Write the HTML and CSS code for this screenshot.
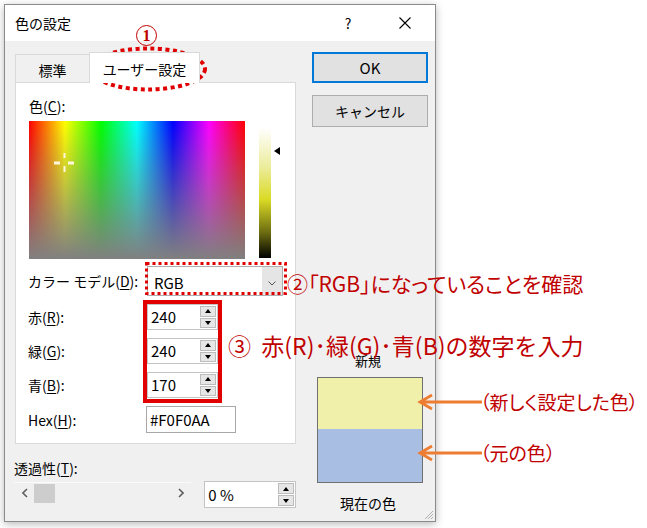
FILE: index.html
```html
<!DOCTYPE html>
<html lang="ja">
<head>
<meta charset="utf-8">
<title>色の設定</title>
<link rel="stylesheet" href="styles.css">
</head>
<body>
<div class="stage">
  <div class="dialog">
    <div class="titlebar">
      <span class="title">色の設定</span>
      <span class="help">?</span>
      <svg class="close" width="12" height="12" viewBox="0 0 12 12"><path d="M0.5 0.5 L11.5 11.5 M11.5 0.5 L0.5 11.5" stroke="#000" stroke-width="1.1" fill="none"/></svg>
    </div>
    <div class="content">
      <div class="left">
        <div class="tabs">
          <div class="tab">標準</div>
          <div class="tab active">ユーザー設定</div>
        </div>
        <div class="panel">
          <div class="color-label">色(<u>C</u>):</div>
          <div class="picker">
            <div class="spectrum">
              <svg class="cross" width="21" height="21" viewBox="0 0 21 21">
                <rect x="9.5" y="0" width="2" height="5" fill="#fff6dc"/>
                <rect x="9.5" y="13" width="2" height="6" fill="#fff6dc"/>
                <rect x="0" y="8.5" width="6" height="3" fill="#fff6dc"/>
                <rect x="14" y="8.5" width="6" height="3" fill="#fff6dc"/>
              </svg>
            </div>
            <div class="lumbar"></div>
            <div class="lumarrow"></div>
          </div>
          <div class="fields">
            <div class="field model">
              <span class="flabel">カラー モデル(<u>D</u>):</span>
              <div class="select"><span class="select-text">RGB</span><span class="select-btn"><svg width="8" height="5" viewBox="0 0 8 5"><path d="M0.5 0.5 L4 4 L7.5 0.5" stroke="#555" stroke-width="1" fill="none"/></svg></span></div>
            </div>
            <div class="field">
              <span class="flabel">赤(<u>R</u>):</span>
              <div class="spin"><span class="spin-val">240</span><span class="spin-btns"><span class="sb up"></span><span class="sb down"></span></span></div>
            </div>
            <div class="field">
              <span class="flabel">緑(<u>G</u>):</span>
              <div class="spin"><span class="spin-val">240</span><span class="spin-btns"><span class="sb up"></span><span class="sb down"></span></span></div>
            </div>
            <div class="field">
              <span class="flabel">青(<u>B</u>):</span>
              <div class="spin"><span class="spin-val">170</span><span class="spin-btns"><span class="sb up"></span><span class="sb down"></span></span></div>
            </div>
            <div class="field hexrow">
              <span class="flabel">Hex(<u>H</u>):</span>
              <div class="hex">#F0F0AA</div>
            </div>
          </div>
        </div>
        <div class="transp">
          <div class="transp-label">透過性(<u>T</u>):</div>
          <div class="transp-row">
            <div class="scrollbar">
              <svg class="sarrow" width="6" height="10" viewBox="0 0 6 10"><path d="M5 1 L1 5 L5 9" stroke="#606060" stroke-width="1.6" fill="none"/></svg>
              <span class="thumb"></span>
              <span class="strack"></span>
              <svg class="sarrow" width="6" height="10" viewBox="0 0 6 10"><path d="M1 1 L5 5 L1 9" stroke="#606060" stroke-width="1.6" fill="none"/></svg>
            </div>
            <div class="spin pct"><span class="spin-val">0 %</span><span class="spin-btns"><span class="sb up"></span><span class="sb down"></span></span></div>
          </div>
        </div>
      </div>
      <div class="right">
        <div class="btn ok">OK</div>
        <div class="btn cancel">キャンセル</div>
        <div class="preview">
          <div class="pv-label">新規</div>
          <div class="swatch"><div class="sw-new"></div><div class="sw-cur"></div></div>
          <div class="pv-label cur">現在の色</div>
        </div>
      </div>
    </div>
    <svg class="grip" width="10" height="10" viewBox="0 0 10 10"><path d="M9 1 L1 9 M9 4 L4 9 M9 7 L7 9" stroke="#b0b0b0" stroke-width="1" fill="none"/></svg>
  </div>

  <div class="note-num1"><span>1</span></div>
  <svg class="note-ellipse" width="124" height="50" viewBox="0 0 124 50"><ellipse cx="62" cy="25" rx="57" ry="20.5" fill="none" stroke="#e00000" stroke-width="4" stroke-dasharray="4 3.5"/></svg>
  <svg class="note-dotrect" width="142" height="33" viewBox="0 0 142 33"><rect x="1.5" y="1.5" width="139" height="30" fill="none" stroke="#e00000" stroke-width="3" stroke-dasharray="3 3"/></svg>
  <div class="note-box"></div>
  <div class="note note2">②「RGB」になっていることを確認</div>
  <div class="note note3">③&nbsp; 赤(R)･緑(G)･青(B)の数字を入力</div>
  <svg class="note-arrows" width="70" height="70" viewBox="0 0 70 70">
    <path d="M4 10 L66 10 M16 3 L4 10 L16 17" stroke="#ed7d31" stroke-width="2.8" fill="none"/>
    <path d="M4 61 L66 61 M16 54 L4 61 L16 68" stroke="#ed7d31" stroke-width="2.8" fill="none"/>
  </svg>
  <div class="note note4">（新しく設定した色）</div>
  <div class="note note5">（元の色）</div>
</div>
</body>
</html>
```

FILE: styles.css
```css
* { box-sizing: border-box; }
html, body { margin: 0; padding: 0; background: #fff; }
body {
  font-family: "Noto Sans CJK JP", "Noto Sans", sans-serif;
  font-size: 14px;
  color: #000;
}
u { text-decoration: underline; text-underline-offset: 2px; }

.stage {
  position: relative;
  width: 647px;
  height: 528px;
  overflow: hidden;
  padding: 4px 0 0 4px;
}

.dialog {
  position: relative;
  width: 432px;
  height: 518px;
  border: 1px solid #8a8a8a;
  background: #f0f0f0;
  box-shadow: 0 2px 8px rgba(0,0,0,0.28);
  display: flex;
  flex-direction: column;
}

.titlebar {
  height: 36px;
  flex: none;
  background: #fff;
  display: flex;
  align-items: center;
  padding-left: 10px;
}
.title { flex: 1; font-size: 14px; line-height: 18px; }
.help { width: 20px; text-align: center; margin-right: 41px; font-size: 14px; line-height: 18px; }
.close { margin-right: 24px; display: block; }

.content {
  display: flex;
  gap: 16px;
  padding: 11px 0 0 10px;
}
.left { width: 281px; display: flex; flex-direction: column; }
.right { width: 116px; display: flex; flex-direction: column; }

.tabs {
  display: flex;
  align-items: flex-end;
  height: 30px;
  position: relative;
  z-index: 1;
}
.tab {
  height: 28px;
  width: 75px;
  border: 1px solid #d9d9d9;
  border-bottom: none;
  display: flex;
  align-items: center;
  justify-content: center;
  padding-top: 3px;
  font-size: 14px;
}
.tab.active {
  width: 111px;
  height: 31px;
  margin-left: -1px;
  margin-bottom: -1px;
  background: #fff;
  padding-top: 2px;
}

.panel {
  height: 362px;
  border: 1px solid #d9d9d9;
  background: #fff;
  padding: 14px 0 0 12px;
}
.color-label { line-height: 18px; padding-left: 1px; }
.picker { display: flex; align-items: flex-start; margin-top: 6px; padding-left: 1px; }
.spectrum {
  position: relative;
  width: 216px;
  height: 138px;
  background:
    linear-gradient(to bottom, rgba(128,128,128,0) 0%, rgba(128,128,128,1) 100%),
    linear-gradient(to right, #ff0000 0%, #ffff00 16.67%, #00ff00 33.33%, #00ffff 50%, #0000ff 66.67%, #ff00ff 83.33%, #ff0000 100%);
}
.cross { position: absolute; left: 25px; top: 32px; }
.lumbar {
  width: 12px;
  height: 130px;
  margin: 7px 0 0 14px;
  background: linear-gradient(to bottom, #ffffff 0%, #ecec9c 30%, #dada25 55%, #6e6e12 80%, #000000 100%);
}
.lumarrow {
  width: 0; height: 0;
  margin: 26px 0 0 3px;
  border-top: 4px solid transparent;
  border-bottom: 4px solid transparent;
  border-right: 6px solid #000;
}

.fields { display: flex; flex-direction: column; gap: 8px; margin-top: 7px; }
.field { display: flex; align-items: center; height: 26px; }
.field.model { height: 30px; }
.field.hexrow { height: 27px; }
.flabel { width: 119px; flex: none; line-height: 18px; }

.select {
  width: 136px;
  height: 30px;
  border: 1px solid #adadad;
  background: #fff;
  display: flex;
  align-items: center;
}
.select-text { flex: 1; padding-left: 6px; font-size: 15px; padding-top: 3px; }
.select-btn {
  width: 20px;
  height: 100%;
  background: #e5e5e5;
  display: flex;
  align-items: center;
  justify-content: center;
  padding-top: 4px;
}
.select-btn svg { display: block; }

.spin {
  width: 71px;
  height: 26px;
  border: 1px solid #c4c4c4;
  background: #fff;
  display: flex;
  align-items: center;
}
.spin-val { flex: 1; padding-left: 3px; font-size: 15px; line-height: 18px; }
.spin-btns {
  width: 17px;
  height: 100%;
  display: flex;
  flex-direction: column;
  gap: 1px;
  padding: 1px 1px 1px 0;
}
.sb {
  flex: 1;
  background: #e6e6e6;
  border: 1px solid #bcbcbc;
  position: relative;
}
.sb::after {
  content: "";
  position: absolute;
  left: 50%;
  top: 50%;
  margin-left: -3px;
  width: 0; height: 0;
  border-left: 3px solid transparent;
  border-right: 3px solid transparent;
}
.sb.up::after { border-bottom: 4px solid #000; margin-top: -2px; }
.sb.down::after { border-top: 4px solid #000; margin-top: -2px; }

.hex {
  width: 90px;
  height: 27px;
  margin-left: -1px;
  border: 1px solid #a8a8a8;
  background: #fff;
  padding-left: 3px;
  font-size: 15px;
  line-height: 25px;
}

.transp { margin: 15px 0 0 -1px; }
.transp-label { line-height: 18px; }
.transp-row { display: flex; align-items: flex-start; margin-top: 4px; }
.scrollbar {
  width: 178px;
  height: 21px;
  margin-top: 1px;
  border-top: 1px solid #fafafa;
  display: flex;
  align-items: center;
  padding: 0 7px 0 8px;
}
.sarrow { display: block; flex: none; }
.thumb { width: 21px; height: 19px; background: #cdcdcd; margin-left: 6px; align-self: flex-end; }
.strack { flex: 1; }
.spin.pct { width: 92px; height: 27px; margin-left: 13px; }

.btn {
  height: 31px;
  background: #e1e1e1;
  border: 1px solid #adadad;
  display: flex;
  align-items: center;
  justify-content: center;
  font-size: 14px;
}
.btn.ok { border: 2px solid #0078d7; font-size: 15px; }
.btn.cancel { margin-top: 12px; height: 32px; }

.preview { margin-top: 225px; width: 112px; display: flex; flex-direction: column; align-items: center; }
.pv-label { font-size: 13px; line-height: 18px; }
.pv-label.cur { margin-top: 11px; font-size: 14px; }
.swatch {
  width: 106px;
  height: 106px;
  margin-top: 7px;
  margin-left: 3px;
  border: 1px solid #707070;
  display: flex;
  flex-direction: column;
}
.sw-new { height: 51px; background: #f0f0aa; }
.sw-cur { flex: 1; background: #a8bee3; }

.grip { position: absolute; right: 1px; bottom: 1px; }

/* annotations */
.note-num1 {
  position: absolute;
  left: 136px;
  top: 25px;
  width: 21px;
  height: 21px;
  border: 1.5px solid #c00000;
  border-radius: 50%;
  display: flex;
  align-items: center;
  justify-content: center;
  font-family: "Liberation Serif", serif;
  font-weight: bold;
  font-size: 16px;
  color: #c00000;
  line-height: 1;
}
.note-ellipse { position: absolute; left: 86px; top: 44px; }
.note-dotrect { position: absolute; left: 145px; top: 262px; }
.note-box {
  position: absolute;
  left: 143px;
  top: 300px;
  width: 79px;
  height: 103px;
  border: 4px solid #e00000;
}
.note {
  position: absolute;
  color: #c00000;
  font-family: "Noto Sans CJK JP", sans-serif;
  white-space: nowrap;
}
.note2 { left: 287px; top: 270px; font-size: 21px; line-height: 26px; font-feature-settings: "palt"; }
.note3 { left: 228px; top: 330px; font-size: 23px; line-height: 30px; }
.note4 { left: 480px; top: 389px; font-size: 19px; line-height: 26px; font-feature-settings: "palt"; }
.note5 { left: 480px; top: 440px; font-size: 19px; line-height: 26px; font-feature-settings: "palt"; }
.note-arrows { position: absolute; left: 416px; top: 392px; }
```
